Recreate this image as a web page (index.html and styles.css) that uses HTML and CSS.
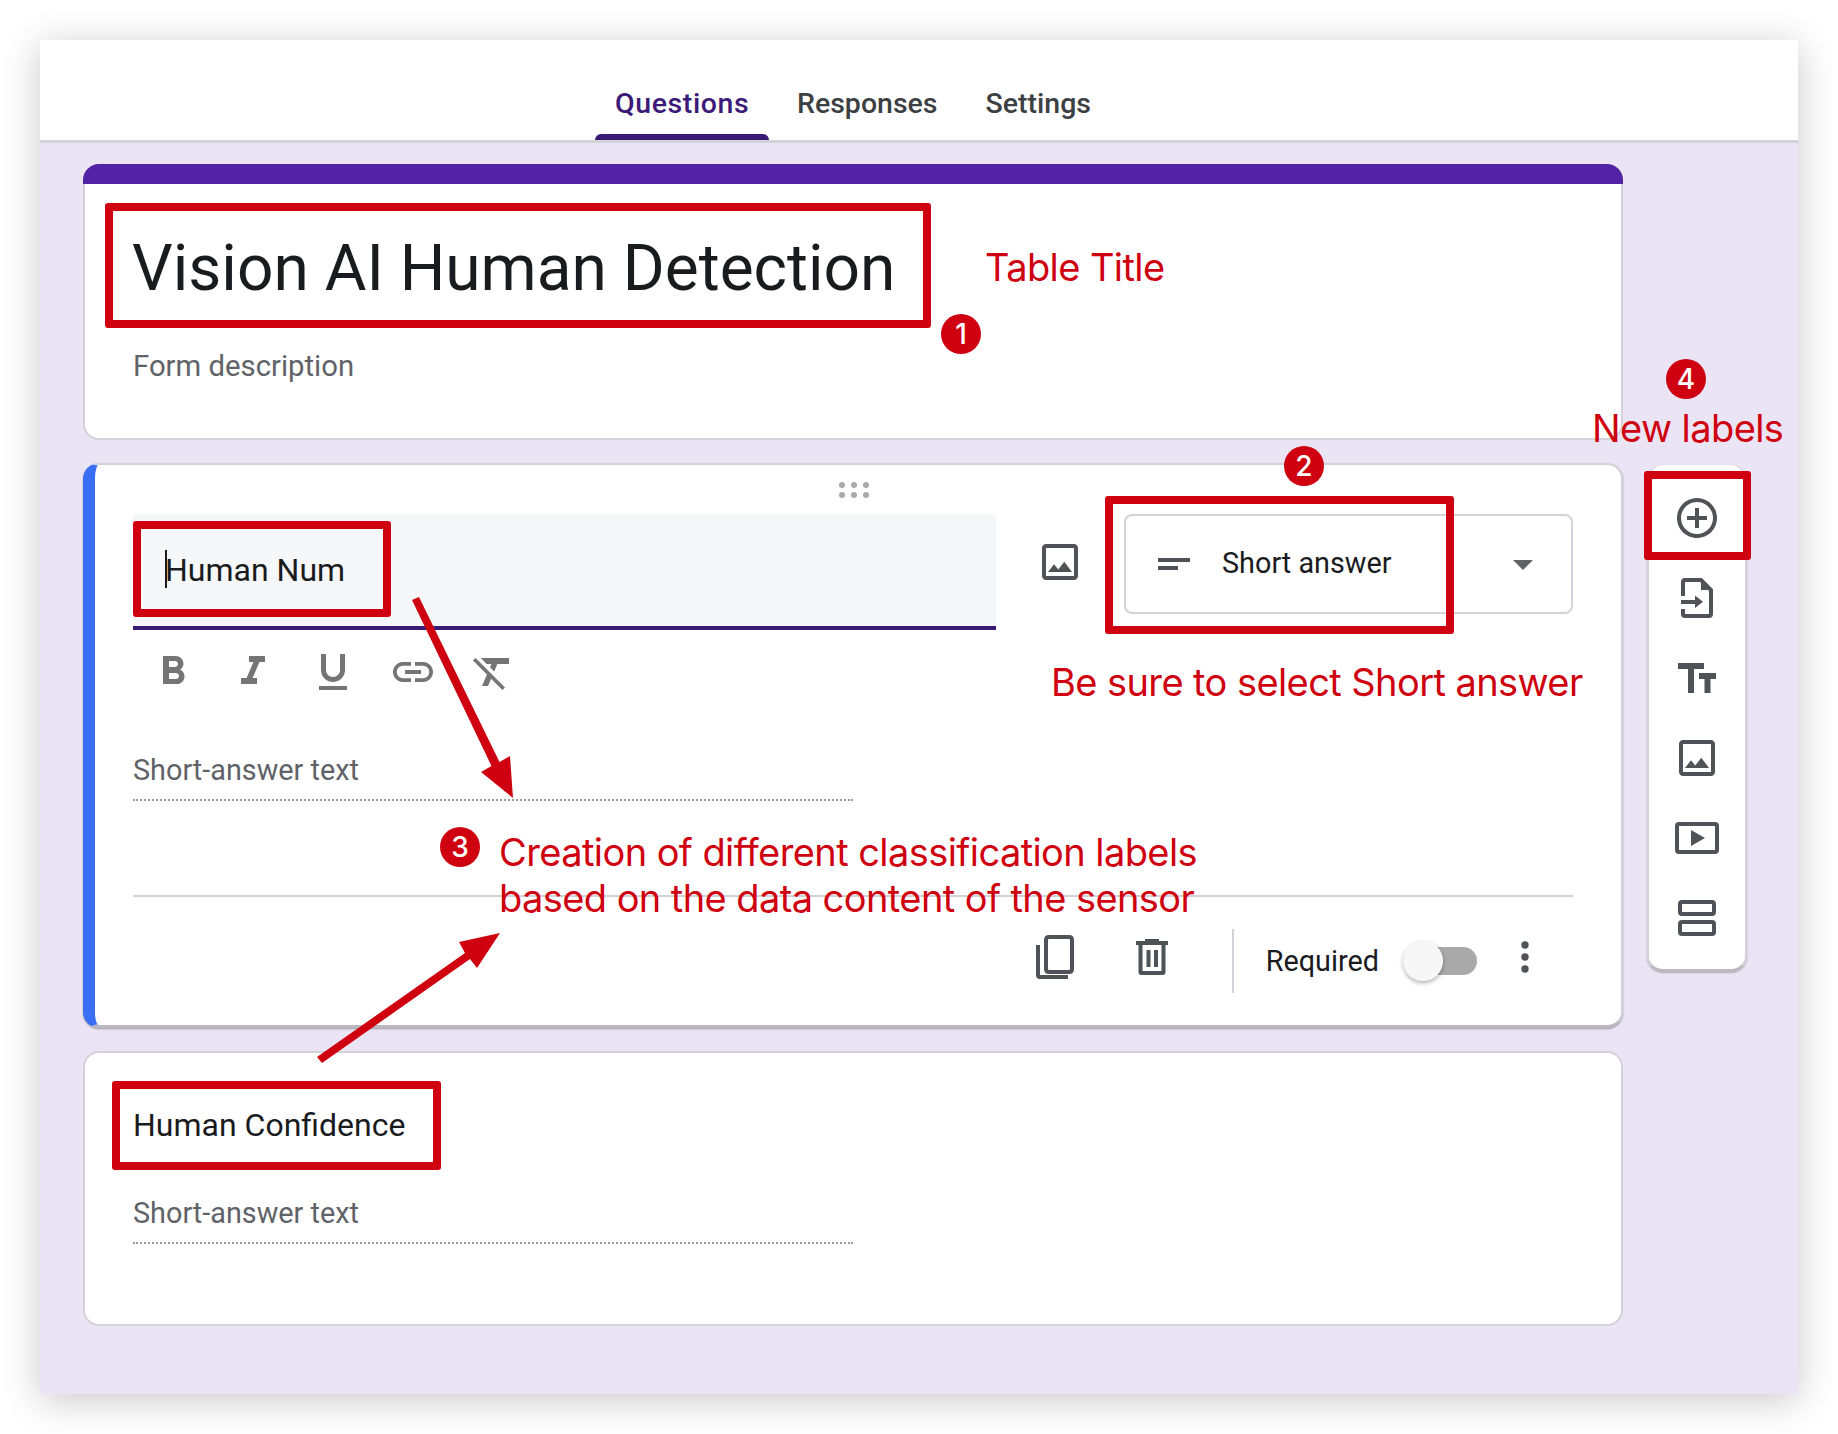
FILE: index.html
```html
<!DOCTYPE html>
<html lang="en">
<head>
<meta charset="utf-8">
<title>Vision AI Human Detection</title>
<link rel="stylesheet" href="styles.css">
</head>
<body>
<div class="window">
  <header class="tabs">
    <div class="tab tab-active">Questions</div>
    <div class="tab">Responses</div>
    <div class="tab">Settings</div>
  </header>
  <main class="main">
    <div class="column">
      <section class="card card-title">
        <div class="title-bar"></div>
        <div class="form-title">Vision AI Human Detection</div>
        <div class="form-desc">Form description</div>
      </section>
      <section class="card card-active">
        <div class="handle">
          <svg width="30" height="16" viewBox="0 0 30 16"><g fill="#aaa"><circle cx="3" cy="3" r="3"/><circle cx="15" cy="3" r="3"/><circle cx="27" cy="3" r="3"/><circle cx="3" cy="13" r="3"/><circle cx="15" cy="13" r="3"/><circle cx="27" cy="13" r="3"/></g></svg>
        </div>
        <div class="q-row">
          <div class="q-left">
            <div class="q-input"><span class="caret"></span>Human Num</div>
            <div class="format-bar">
              <svg class="ico48 fmt" viewBox="0 0 24 24"><path d="M15.6 10.79c.97-.67 1.65-1.77 1.65-2.79 0-2.26-1.75-4-4-4H7v14h7.04c2.09 0 3.71-1.7 3.71-3.79 0-1.52-.86-2.82-2.15-3.42zM10 6.5h3c.83 0 1.5.67 1.5 1.5s-.67 1.5-1.5 1.5h-3v-3zm3.5 9H10v-3h3.5c.83 0 1.5.67 1.5 1.5s-.67 1.5-1.5 1.5z"/></svg>
              <svg class="ico48 fmt" viewBox="0 0 24 24"><path d="M10 4v3h2.21l-3.42 8H6v3h8v-3h-2.21l3.42-8H18V4z"/></svg>
              <svg class="ico48 fmt" viewBox="0 0 24 24"><path d="M12 17c3.31 0 6-2.69 6-6V3h-2.5v8c0 1.93-1.57 3.5-3.5 3.5S8.5 12.93 8.5 11V3H6v8c0 3.31 2.69 6 6 6zm-7 2v2h14v-2H5z"/></svg>
              <svg class="ico48 fmt" viewBox="0 0 24 24"><path d="M3.9 12c0-1.71 1.39-3.1 3.1-3.1h4V7H7c-2.76 0-5 2.24-5 5s2.24 5 5 5h4v-1.9H7c-1.71 0-3.1-1.39-3.1-3.1zM8 13h8v-2H8v2zm9-6h-4v1.9h4c1.71 0 3.1 1.39 3.1 3.1s-1.39 3.1-3.1 3.1h-4V17h4c2.76 0 5-2.24 5-5s-2.24-5-5-5z"/></svg>
              <svg class="ico48 fmt" viewBox="0 0 24 24"><path d="M3.27 5L2 6.27l6.97 6.97L6.5 19h3l1.57-3.66L16.73 21 18 19.73 3.55 5.27 3.27 5zM6 5v.18L8.82 8h2.4l-.72 1.68 2.1 2.1L14.21 8H20V5H6z"/></svg>
            </div>
            <div class="short-field short-first">Short-answer text</div>
          </div>
          <svg class="ico48 dark q-image" viewBox="0 0 24 24"><path d="M19 5v14H5V5h14m0-2H5c-1.1 0-2 .9-2 2v14c0 1.1.9 2 2 2h14c1.1 0 2-.9 2-2V5c0-1.1-.9-2-2-2zm-4.86 8.86l-3 3.87L9 13.14 6 17h12l-3.86-5.14z"/></svg>
          <div class="select">
            <svg class="lines" width="32" height="12" viewBox="0 0 32 12"><path d="M0 0h32v4H0zM0 8h20v4H0z"/></svg>
            <span class="select-text">Short answer</span>
            <svg class="select-arrow" width="20" height="10" viewBox="0 0 20 10"><path d="M0 0h20L10 10z"/></svg>
          </div>
        </div>
        <div class="divider"></div>
        <div class="actions">
          <svg class="act-copy" width="38" height="44" viewBox="0 0 38 44"><path class="st" d="M2 10v30q0 2 2 2h28M10 5q0-3 3-3h20q3 0 3 3v29q0 3-3 3H13q-3 0-3-3z"/></svg>
          <svg class="act-trash" width="32" height="36" viewBox="0 0 32 36"><path class="fl" d="M9 0h14v2h9v4H0V2h9zM10.500 11h4v17h-4zM18 11h4v17h-4z"/><path class="st" d="M4.500 6v27q0 1 1 1h21q1 0 1-1V6"/></svg>
          <div class="vline"></div>
          <span class="req">Required</span>
          <div class="toggle"><div class="track"></div><div class="knob"></div></div>
          <svg class="act-more" width="8" height="32" viewBox="0 0 8 32"><g fill="#4f5257"><circle cx="4" cy="4" r="3.700"/><circle cx="4" cy="16" r="3.700"/><circle cx="4" cy="28" r="3.700"/></g></svg>
        </div>
      </section>
      <section class="card card-q">
        <div class="q-title">Human Confidence</div>
        <div class="short-field">Short-answer text</div>
      </section>
    </div>
    <aside class="toolbar">
      <div class="tool"><svg class="ico48 dark" viewBox="0 0 24 24"><path d="M13 7h-2v4H7v2h4v4h2v-4h4v-2h-4V7zm-1-5C6.480 2 2 6.480 2 12s4.480 10 10 10 10-4.480 10-10S17.520 2 12 2zm0 18c-4.410 0-8-3.590-8-8s3.590-8 8-8 8 3.590 8 8-3.590 8-8 8z"/></svg></div>
      <div class="tool"><svg width="32" height="40" viewBox="0 0 32 40"><path class="st" d="M2 18V4q0-2 2-2h16l10 10v24q0 2-2 2H4q-2 0-2-2v-5"/><path class="fl" d="M20 2l10 10H20zM0 22h14v-4.500l8 6.200-8 6.200V26H0z"/></svg></div>
      <div class="tool"><svg width="38" height="30" viewBox="0 0 38 30"><path class="fl" d="M0 0h26v6H16v24h-6V6H0zM21 10h17v6h-5.500v14h-6V16H21z"/></svg></div>
      <div class="tool"><svg class="ico48 dark" viewBox="0 0 24 24"><path d="M19 5v14H5V5h14m0-2H5c-1.100 0-2 .9-2 2v14c0 1.100.9 2 2 2h14c1.100 0 2-.9 2-2V5c0-1.100-.9-2-2-2zm-4.860 8.860l-3 3.870L9 13.140 6 17h12l-3.860-5.140z"/></svg></div>
      <div class="tool"><svg width="44" height="32" viewBox="0 0 44 32"><rect class="st" x="2" y="2" width="40" height="28" rx="2"/><path class="fl" d="M16 8l14 8-14 8z"/></svg></div>
      <div class="tool"><svg width="38" height="36" viewBox="0 0 38 36"><rect class="st" x="2" y="2" width="34" height="12" rx="2"/><rect class="st" x="2" y="22" width="34" height="12" rx="2"/></svg></div>
    </aside>
  </main>

  <div class="overlay">
    <svg class="arrows" width="1758" height="1354" viewBox="40 40 1758 1354">
      <polygon points="412,600 419,597 499.500,762 510,756 513,798 481,772 491.500,766"/>
      <polygon points="317,1057 322,1063 470,959 477,968 500,933 459,942 465,953"/>
    </svg>
    <div class="box box-1"></div>
    <div class="box box-2"></div>
    <div class="box box-3"></div>
    <div class="box box-4"></div>
    <div class="box box-5"></div>
    <div class="badge badge-1">1</div>
    <div class="badge badge-2">2</div>
    <div class="badge badge-3">3</div>
    <div class="badge badge-4">4</div>
    <div class="note note-title">Table Title</div>
    <div class="note note-new">New labels</div>
    <div class="note note-short">Be sure to select Short answer</div>
    <div class="note note-create">Creation of different classification labels<br>based on the data content of the sensor</div>
  </div>
</div>
</body>
</html>
```
FILE: styles.css
```css
* { box-sizing: border-box; }
html, body { margin: 0; padding: 0; background: #fff; }
body {
  padding: 40px;
  width: 1838px;
  height: 1434px;
  overflow: hidden;
  font-family: Roboto, "Liberation Sans", sans-serif;
  color: #1a1b1e;
}
.window {
  position: relative;
  width: 1758px;
  height: 1354px;
  background: #ebe4f4;
  box-shadow: 0 6px 36px rgba(0, 0, 0, .22);
}

/* tabs */
.tabs {
  display: flex;
  gap: 8px;
  height: 103px;
  padding-left: 555px;
  background: #fff;
  border-bottom: 3px solid #d2d2d8;
}
.tab {
  position: relative;
  height: 100px;
  padding: 44px 20px 0;
  font-size: 28.500px;
  line-height: 40px;
  font-weight: 500;
  color: #3c4043;
}
.tab-active {
  width: 174px;
  letter-spacing: .6px;
  color: #3b1a78;
}
.tab-active::after {
  content: "";
  position: absolute;
  left: 0;
  right: 0;
  bottom: 0;
  height: 6px;
  background: #391b75;
  border-radius: 6px 6px 0 0;
}

/* main layout */
.main {
  display: flex;
  gap: 24px;
  padding: 21px 0 0 43px;
  align-items: flex-start;
}
.column {
  display: flex;
  flex-direction: column;
  gap: 23px;
  width: 1540px;
}
.card {
  background: #fff;
  border: 2px solid #d2d2d8;
  border-radius: 16px;
}
.card-title {
  height: 276px;
  padding-left: 48px;
}
.title-bar {
  height: 20px;
  margin: -2px -2px 0 -50px;
  background: #5323a6;
  border-radius: 16px 16px 0 0;
}
.form-title {
  margin: 47px 0 0 -1px;
  font-size: 64px;
  line-height: 75px;
  color: #1a1b1e;
}
.form-desc {
  margin-top: 43px;
  font-size: 29.300px;
  line-height: 34px;
  color: #5f6368;
}

/* active question */
.card-active {
  height: 565px;
  border-left: 12px solid #3a6ff5;
  border-bottom: 3px solid #b9b9c0;
  box-shadow: 0 1px 2px rgba(0, 0, 0, .35);
  padding-left: 38px;
  padding-right: 48px;
}
.handle {
  height: 49px;
  display: flex;
  align-items: center;
  justify-content: center;
  padding-left: 2px;
}
.q-row {
  display: flex;
  align-items: flex-start;
}
.q-left {
  width: 863px;
  flex: none;
}
.q-input {
  position: relative;
  height: 116px;
  background: #f6f7f9;
  border-bottom: 4px solid #391b75;
  padding: 33px 0 0 32px;
  font-size: 32px;
  line-height: 46px;
  color: #1a1b1e;
}
.caret {
  position: absolute;
  left: 32px;
  top: 36px;
  width: 2px;
  height: 38px;
  background: #1a1b1e;
}
.format-bar {
  display: flex;
  gap: 32px;
  margin: 18px 0 0 16px;
}
.ico48 { width: 48px; height: 48px; flex: none; display: block; }
.fmt path { fill: #757575; }
.dark path { fill: #4f5257; }
.q-image { margin: 24px 40px 0 40px; }
.short-field {
  width: 720px;
  height: 58px;
  padding-top: 10px;
  font-size: 28.800px;
  line-height: 34px;
  color: #5f6368;
  border-bottom: 2px dotted #9a9a9a;
}
.short-first { margin-top: 47px; }
.select {
  display: flex;
  align-items: center;
  width: 450px;
  height: 100px;
  border: 2px solid #d2d2d8;
  border-radius: 8px;
  padding: 0 38px 0 32px;
}
.lines path { fill: #4f5257; }
.select-text {
  margin: -3px 0 0 32px;
  font-size: 28.800px;
  line-height: 34px;
  color: #1a1b1e;
}
.select-arrow { margin-left: auto; margin-top: 2px; }
.select-arrow path { fill: #5f6368; }
.divider {
  height: 2px;
  margin-top: 94px;
  background: #d2d2d8;
}
.actions {
  display: flex;
  align-items: center;
  justify-content: flex-end;
  height: 64px;
  margin-top: 32px;
  margin-right: 44px;
}
.st { fill: none; stroke: #4f5257; stroke-width: 4; }
.fl { fill: #4f5257; }
.act-copy { margin: 0 62px 8px 0; }
.act-trash { margin: 0 64px 8px 0; }
.act-more { margin-bottom: 8px; }
.vline { width: 2px; height: 64px; background: #d2d2d8; margin-right: 32px; }
.req { font-size: 28.800px; line-height: 34px; color: #1a1b1e; margin-right: 24px; }
.toggle {
  position: relative;
  display: flex;
  align-items: center;
  justify-content: flex-end;
  width: 74px;
  height: 40px;
  margin-right: 44px;
}
.track { width: 66px; height: 28px; border-radius: 14px; background: #a9a9a9; }
.knob {
  position: absolute;
  left: 0;
  top: 0;
  width: 40px;
  height: 40px;
  border-radius: 50%;
  background: #f7f7f7;
  box-shadow: 0 2px 4px rgba(0, 0, 0, .3);
}

/* third card */
.card-q {
  height: 275px;
  padding: 49px 0 0 48px;
}
.q-title {
  font-size: 32px;
  line-height: 46px;
  color: #1a1b1e;
}
.card-q .short-field { margin-top: 38px; }

/* side toolbar */
.toolbar {
  width: 100px;
  height: 507px;
  flex: none;
  margin-top: 301px;
  padding: 13px 1px 0 0;
  background: #fff;
  border: 2px solid #d2d2d8;
  border-top-width: 0;
  border-bottom: 3px solid #b9b9c0;
  border-radius: 16px;
  box-shadow: 0 1px 2px rgba(0, 0, 0, .25);
}
.tool {
  height: 80px;
  display: flex;
  align-items: center;
  justify-content: center;
}

/* annotations over the form */
.overlay { position: absolute; inset: 0; pointer-events: none; }
.arrows { position: absolute; left: 0; top: 0; overflow: visible; }
.arrows polygon { fill: #cf000f; }
.box { position: absolute; border: 8px solid #cf000f; border-radius: 3px; }
.box-1 { left: 65px; top: 163px; width: 826px; height: 125px; }
.box-2 { left: 93px; top: 481px; width: 258px; height: 96px; }
.box-3 { left: 72px; top: 1041px; width: 329px; height: 89px; }
.box-4 { left: 1065px; top: 456px; width: 349px; height: 138px; }
.box-5 { left: 1604px; top: 431px; width: 107px; height: 89px; }
.badge {
  position: absolute;
  width: 40px;
  height: 40px;
  border-radius: 50%;
  background: #cf000f;
  color: #fff;
  font-family: Inter, sans-serif;
  font-size: 28px;
  font-weight: 500;
  line-height: 40px;
  text-align: center;
}
.badge-1 { left: 901px; top: 274px; }
.badge-2 { left: 1244px; top: 406px; }
.badge-3 { left: 400px; top: 787px; }
.badge-4 { left: 1626px; top: 319px; }
.note {
  position: absolute;
  font-family: Inter, sans-serif;
  font-size: 38px;
  letter-spacing: -.58px;
  line-height: 46px;
  color: #cf000f;
  white-space: nowrap;
}
.note-title { left: 945px; top: 204px; }
.note-new { left: 1552px; top: 365px; }
.note-short { left: 1011px; top: 619px; }
.note-create { left: 459px; top: 789px; }
```
